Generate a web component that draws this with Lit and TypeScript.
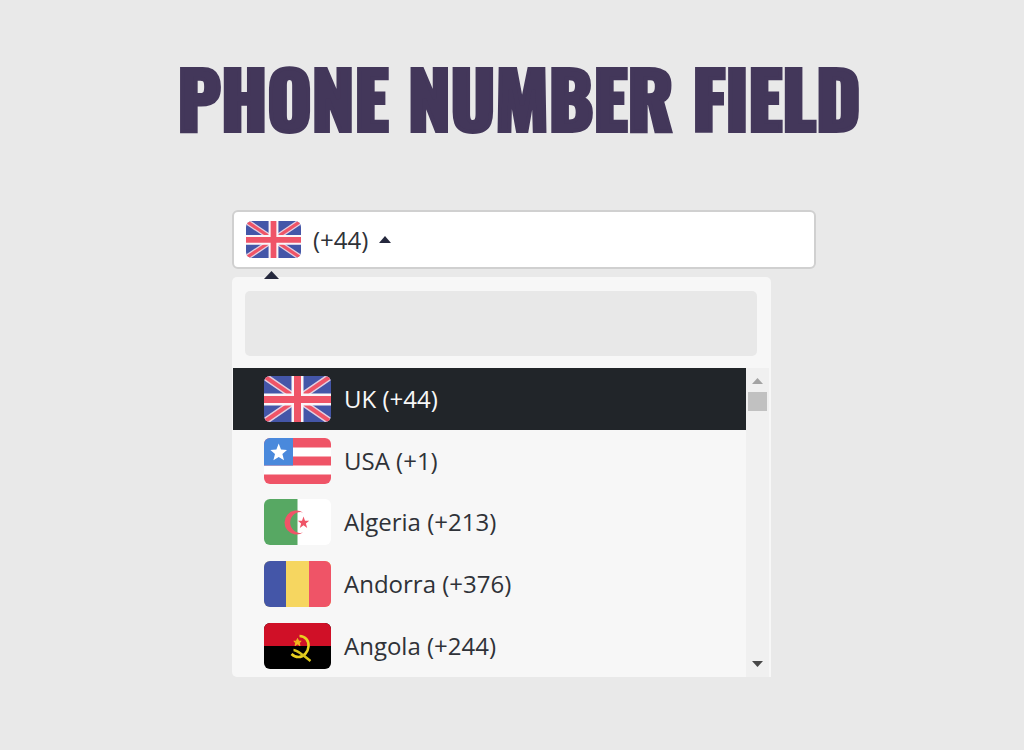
import { LitElement, html, css, svg } from "lit";
import { customElement, property, state } from "lit/decorators.js";
import { classMap } from "lit/directives/class-map.js";

type Country = { id: string; name: string; code: string };

const COUNTRIES: Country[] = [
  { id: "uk", name: "UK", code: "+44" },
  { id: "us", name: "USA", code: "+1" },
  { id: "dz", name: "Algeria", code: "+213" },
  { id: "ad", name: "Andorra", code: "+376" },
  { id: "ao", name: "Angola", code: "+244" },
];

const FLAGS: Record<string, unknown> = {
  uk: svg`
    <rect width="67" height="46" fill="#4456a8"/>
    <path d="M0 0L67 46M67 0L0 46" stroke="#e3cfe0" stroke-width="7"/>
    <path d="M0 0L67 46M67 0L0 46" stroke="#ef5467" stroke-width="4"/>
    <path d="M33.500 0V46M0 23.500H67" stroke="#fbf5f8" stroke-width="12"/>
    <path d="M33.500 0V46M0 23.500H67" stroke="#ef5467" stroke-width="7"/>`,
  us: svg`
    <rect width="67" height="46" fill="#fff"/>
    <path d="M0 0H67V9.500H0ZM0 18.500H67V27.500H0ZM0 36.500H67V46H0Z" fill="#ef5467"/>
    <rect width="29" height="27.500" fill="#4a89dc"/>
    <path d="M14.700 5.500L17 11.500L23 12L18.400 16L20 22.300L14.700 19L9.400 22.300L11 16L6.400 12L12.400 11.500Z" fill="#fff"/>`,
  dz: svg`
    <rect width="67" height="46" fill="#fff"/>
    <rect width="33.500" height="46" fill="#57a863"/>
    <path d="M39 13.400A12 12 0 1 0 39 33.600A10.400 10.400 0 1 1 39 13.400Z" fill="#ef5467"/>
    <path d="M39.500 17.500L41 21.800L45.200 21.800L41.900 24.500L43.200 29L39.500 26.300L35.800 29L37.100 24.500L33.800 21.800L38 21.800Z" fill="#ef5467"/>`,
  ad: svg`
    <rect width="67" height="46" fill="#f6d660"/>
    <rect width="22" height="46" fill="#4456a8"/>
    <rect x="45" width="22" height="46" fill="#ef5467"/>`,
  ao: svg`
    <rect width="67" height="46" fill="#000"/>
    <rect width="67" height="23" fill="#d01027"/>
    <path d="M35.500 13C41.500 13 45 18 44.500 23.500C44 29.500 39.500 34 34.500 34C31.500 34 29.500 33 27.500 31" fill="none" stroke="#e9d020" stroke-width="2.600"/>
    <path d="M29.500 27C33 27 38 31 46.500 38" fill="none" stroke="#d9c51c" stroke-width="2.400"/>
    <path d="M33.500 15.500L34.600 18.200L37.200 18.200L35.200 19.900L36 22.600L33.500 21L31 22.600L31.800 19.900L29.800 18.200L32.400 18.200Z" fill="#f2b61c" stroke="#f2b61c"/>`,
};

@customElement("country-flag")
export class CountryFlag extends LitElement {
  @property() country = "";

  static styles = css`
    :host {
      display: block;
      flex: none;
      border-radius: 6px;
      overflow: hidden;
    }
    .art {
      display: block;
      width: 100%;
      height: 100%;
    }
  `;

  render() {
    return html`<svg class="art" viewBox="0 0 67 46" preserveAspectRatio="none" aria-hidden="true">
      ${FLAGS[this.country]}
    </svg>`;
  }
}

@customElement("app-root")
export class AppRoot extends LitElement {
  @state() private selected = COUNTRIES[0];

  static styles = css`
    :host {
      display: block;
      min-height: 100vh;
      box-sizing: border-box;
      padding: 48px 16px;
      background: #e9e9e9;
      color: #2f3238;
      font: 24px/32px "Open Sans", "Noto Sans", sans-serif;
    }
    * {
      box-sizing: border-box;
    }
    .title {
      margin: 0 0 64px;
      padding-left: 14px;
      text-align: center;
      font: bold 76px/98px Impact, Oswald, "Roboto Condensed", Roboto, sans-serif;
      text-transform: uppercase;
      color: #43375a;
      -webkit-text-stroke: 4px #43375a;
    }
    .content {
      padding-left: 24px;
    }
    .picker {
      max-width: 584px;
      margin: 0 auto;
    }
    .field {
      display: flex;
      height: 59px;
      border: 2px solid #d0d0d0;
      border-radius: 6px;
      background: #fff;
    }
    button {
      border: 0;
      background: none;
      color: inherit;
      font: inherit;
      cursor: pointer;
    }
    .prefix {
      display: flex;
      align-items: center;
      gap: 12px;
      padding: 0 12px;
    }
    .prefix country-flag {
      width: 55px;
      height: 37px;
    }
    .code {
      display: flex;
      align-items: center;
      gap: 11px;
    }
    .caret {
      display: block;
      width: 12px;
      height: 7px;
      fill: #25283d;
    }
    .number {
      flex: 1;
      min-width: 0;
      border: 0;
      outline: 0;
      background: none;
      font: inherit;
    }
    .menu {
      position: relative;
      width: 539px;
      max-width: 100%;
      margin-top: 8px;
      border-radius: 5px;
      background: #f7f7f7;
    }
    .pointer {
      position: absolute;
      left: 32px;
      top: -6px;
      width: 15px;
      height: 8px;
      fill: #25283d;
    }
    .search {
      padding: 14px 14px 12px 13px;
    }
    .query {
      display: block;
      width: 100%;
      height: 65px;
      padding: 0 16px;
      border: 0;
      border-radius: 5px;
      outline: 0;
      background: #e8e8e8;
      font: inherit;
    }
    .body {
      display: flex;
      height: 309px;
      padding-left: 1px;
    }
    .list {
      flex: 1;
      display: grid;
      grid-auto-rows: 1fr;
      margin: 0;
      padding: 0;
      list-style: none;
    }
    .option {
      display: flex;
      align-items: center;
      gap: 13px;
      width: 100%;
      height: 100%;
      padding: 0 31px;
      text-align: left;
    }
    .option country-flag {
      width: 67px;
      height: 46px;
    }
    .active {
      background: #212529;
      color: #f7f7f7;
    }
    .scroll {
      display: flex;
      flex-direction: column;
      align-items: center;
      gap: 8px;
      width: 25px;
      padding: 10px 2px;
      border-right: 2px solid #f7f7f7;
      background: #f0f0f0;
    }
    .arrow {
      display: block;
      width: 11px;
      height: 6px;
      fill: #a3a3a3;
    }
    .thumb {
      width: 19px;
      height: 19px;
      background: #c1c1c1;
    }
    .down {
      margin-top: auto;
      fill: #484848;
    }
  `;

  private option(c: Country) {
    const active = c === this.selected;
    return html`<li>
      <button
        type="button"
        class=${classMap({ option: true, active })}
        aria-pressed=${active}
        @click=${() => (this.selected = c)}
      >
        <country-flag country=${c.id}></country-flag>
        <span>${c.name} (${c.code})</span>
      </button>
    </li>`;
  }

  render() {
    return html`
      <h1 class="title">Phone number field</h1>
      <main class="content">
        <div class="picker">
          <div class="field">
            <button class="prefix" type="button" aria-expanded="true">
              <country-flag country=${this.selected.id}></country-flag>
              <span class="code">
                (${this.selected.code})
                <svg class="caret" viewBox="0 0 12 7" aria-hidden="true"><path d="M0 7L6 0L12 7Z" /></svg>
              </span>
            </button>
            <input class="number" type="tel" aria-label="Phone number" />
          </div>
          <div class="menu">
            <svg class="pointer" viewBox="0 0 15 8" aria-hidden="true"><path d="M0 8L7.500 0L15 8Z" /></svg>
            <div class="search">
              <input class="query" type="search" aria-label="Search country" />
            </div>
            <div class="body">
              <ul class="list">
                ${COUNTRIES.map((c) => this.option(c))}
              </ul>
              <div class="scroll" aria-hidden="true">
                <svg class="arrow" viewBox="0 0 11 6"><path d="M0 6L5.500 0L11 6Z" /></svg>
                <div class="thumb"></div>
                <svg class="arrow down" viewBox="0 0 11 6"><path d="M0 0L5.500 6L11 0Z" /></svg>
              </div>
            </div>
          </div>
        </div>
      </main>
    `;
  }
}
